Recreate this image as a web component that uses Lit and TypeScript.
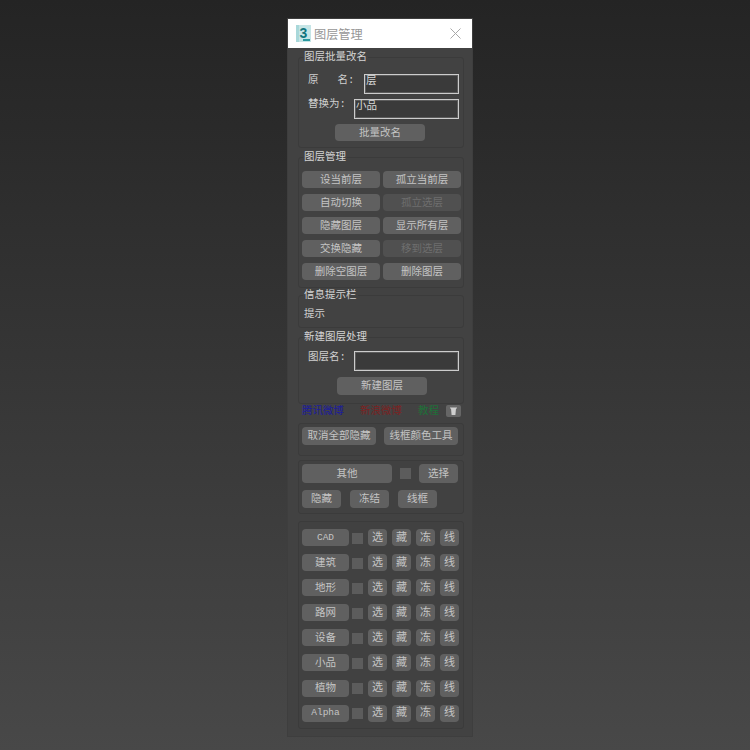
import { LitElement, html, css } from "lit";
import { customElement } from "lit/decorators.js";

const layers = ["CAD", "建筑", "地形", "路网", "设备", "小品", "植物", "Alpha"];
const manage: [string, boolean][] = [
  ["设当前层", false], ["孤立当前层", false],
  ["自动切换", false], ["孤立选层", true],
  ["隐藏图层", false], ["显示所有层", false],
  ["交换隐藏", false], ["移到选层", true],
  ["删除空图层", false], ["删除图层", false],
];

@customElement("app-root")
export class AppRoot extends LitElement {
  static styles = css`
    :host {
      display: block;
      height: 750px;
      box-sizing: border-box;
      padding: 19px 0 0 288px;
      background: linear-gradient(#242424, #484848);
      font-family: "Liberation Mono", "Noto Sans CJK SC", monospace;
      font-size: 10.5px;
      line-height: 12px;
      color: #d0d0d0;
      overflow: hidden;
    }
    .win {
      width: 184px;
      background: #424242;
      box-shadow: 0 0 0 1px #3e3e3e;
    }
    .title {
      height: 29px;
      background: #fff;
      display: flex;
      align-items: center;
      padding: 0 11px 0 8px;
      gap: 3px;
      font-family: "Noto Sans CJK SC", sans-serif;
      font-size: 12.2px;
      color: #969696;
    }
    .title .close { margin-left: auto; display: block; }
    .body {
      padding: 3px 8px 7px 10px;
      display: flex;
      flex-direction: column;
    }
    fieldset, .box {
      margin: 0;
      padding: 0;
      min-width: 0;
      box-sizing: border-box;
      border: 1px solid #3b3b3b;
      border-radius: 3px;
      background: #414141;
    }
    fieldset { background: transparent; }
    legend {
      margin-left: 4px;
      padding: 0 1px;
      height: 12px;
      line-height: 12px;
      color: #d4d4d4;
    }
    .btn {
      display: flex;
      align-items: center;
      justify-content: center;
      box-sizing: border-box;
      height: 17px;
      background: #606060;
      border-radius: 4px;
      color: #c4c4c4;
      white-space: nowrap;
    }
    .btn.off { background: #505050; color: #6e6e6e; }
    .row { display: flex; align-items: flex-start; }
    .lbl { margin-left: 9px; white-space: pre; }
    .input {
      margin-left: auto;
      margin-right: 4px;
      box-sizing: border-box;
      height: 20px;
      border: 1px solid #cccccc;
      box-shadow: inset 0 0 0 1px #5c5c5c;
      background: #3a3a3a;
      padding: 0 1px;
      color: #d8d8d8;
    }
    .g1 { padding: 11px 0 6px; }
    .g1 .i1 { width: 95px; }
    .g1 .i2 { width: 105px; }
    .g1 .l2 { margin-top: 5px; }
    .g1 .l2 .lbl { margin-top: -1px; }
    .g1 .batch { width: 90px; margin: 5px 0 0 36px; }
    .g2 { margin-top: 3px; padding: 8px 3px 7px; }
    .g2 legend { margin-left: 1px; }
    .grid { display: grid; grid-template-columns: 78px 78px; gap: 6px 3px; }
    .g3 { margin-top: 1px; padding: 7px 5px 7px; }
    .g3 legend { margin-left: -1px; }
    .g4 { margin-top: 3px; padding: 8px 0 8px; }
    .g4 .i2 { width: 105px; }
    .g4 .make { width: 90px; height: 18px; margin: 6px 0 0 38px; }
    .links { display: flex; align-items: center; height: 12px; margin-top: 1px; padding-left: 4px; letter-spacing: -0.1px; }
    .links span { width: 58px; flex: none; white-space: nowrap; }
    .links .a { color: #1c1c9c; }
    .links .b { color: #7a2222; }
    .links .c { color: #1e7038; width: 28px; }
    .trash {
      width: 15px;
      height: 12px;
      background: #666;
      border-radius: 2px;
      display: flex;
      align-items: center;
      justify-content: center;
    }
    .g5 { margin-top: 6px; padding: 3px 3px 10px; display: flex; gap: 8px; }
    .g5 .btn { width: 74px; height: 18px; }
    .g6 { margin-top: 4px; padding: 3px 3px 5px; }
    .g6 .top { display: flex; align-items: center; }
    .g6 .top .btn { height: 19px; }
    .g6 .other { width: 90px; }
    .g6 .sel { width: 39px; }
    .g6 .chk { margin: 0 8px; }
    .g6 .bot { display: flex; gap: 9px; margin-top: 7px; }
    .g6 .bot .btn { width: 39px; height: 18px; }
    .chk { width: 11px; height: 11px; background: #5c5c5c; flex: none; }
    .g7 { margin-top: 7px; padding: 7px 3px 6px; display: flex; flex-direction: column; gap: 8.1px; }
    .lr { display: flex; align-items: center; }
    .lr .name { width: 47px; }
    .lr .latin { font-size: 9.5px; }
    .lr .chk { margin: 1px 5px 0 3px; }
    .lr .s { width: 19px; margin-right: 5px; font-size: 11px; }
    .lr .s:last-child { margin-right: 0; }
  `;

  render() {
    return html`
      <div class="win">
        <div class="title">
          <svg width="15" height="17" viewBox="0 0 15 17">
            <rect width="15" height="17" fill="#c6e5e6"/>
            <rect x="0" y="0" width="3" height="17" fill="#a9d8da"/>
            <rect x="7" y="14" width="7" height="2" fill="#2a9aa0"/>
            <text x="7.5" y="12.5" text-anchor="middle" font-family="Liberation Sans" font-weight="700" font-size="14" fill="#12767e">3</text>
          </svg>
          <span>图层管理</span>
          <svg class="close" width="11" height="11" viewBox="0 0 11 11">
            <path d="M0.5 0.5L10.5 10.5M10.5 0.5L0.5 10.5" stroke="#a8a8a8" stroke-width="1" fill="none"/>
          </svg>
        </div>
        <div class="body">
          <fieldset class="g1">
            <legend>图层批量改名</legend>
            <div class="row"><span class="lbl">原   名:</span><div class="input i1">层</div></div>
            <div class="row l2"><span class="lbl">替换为:</span><div class="input i2">小品</div></div>
            <div class="btn batch">批量改名</div>
          </fieldset>
          <fieldset class="g2">
            <legend>图层管理</legend>
            <div class="grid">
              ${manage.map(([t, off]) => html`<div class="btn ${off ? "off" : ""}">${t}</div>`)}
            </div>
          </fieldset>
          <fieldset class="g3">
            <legend>信息提示栏</legend>
            提示
          </fieldset>
          <fieldset class="g4">
            <legend>新建图层处理</legend>
            <div class="row"><span class="lbl">图层名:</span><div class="input i2"></div></div>
            <div class="btn make">新建图层</div>
          </fieldset>
          <div class="links">
            <span class="a">腾讯微博</span><span class="b">新浪微博</span><span class="c">教程</span>
            <div class="trash">
              <svg width="7" height="8" viewBox="0 0 7 8">
                <path d="M0 0.5H7V1.5H6L5.4 8H1.6L1 1.5H0Z" fill="#cfcfcf"/>
              </svg>
            </div>
          </div>
          <div class="box g5">
            <div class="btn">取消全部隐藏</div>
            <div class="btn">线框颜色工具</div>
          </div>
          <div class="box g6">
            <div class="top">
              <div class="btn other">其他</div>
              <div class="chk"></div>
              <div class="btn sel">选择</div>
            </div>
            <div class="bot">
              <div class="btn">隐藏</div>
              <div class="btn">冻结</div>
              <div class="btn">线框</div>
            </div>
          </div>
          <div class="box g7">
            ${layers.map(
              (n) => html`<div class="lr">
                <div class="btn name ${/^[A-Za-z]/.test(n) ? "latin" : ""}">${n}</div>
                <div class="chk"></div>
                <div class="btn s">选</div>
                <div class="btn s">藏</div>
                <div class="btn s">冻</div>
                <div class="btn s">线</div>
              </div>`
            )}
          </div>
        </div>
      </div>
    `;
  }
}
